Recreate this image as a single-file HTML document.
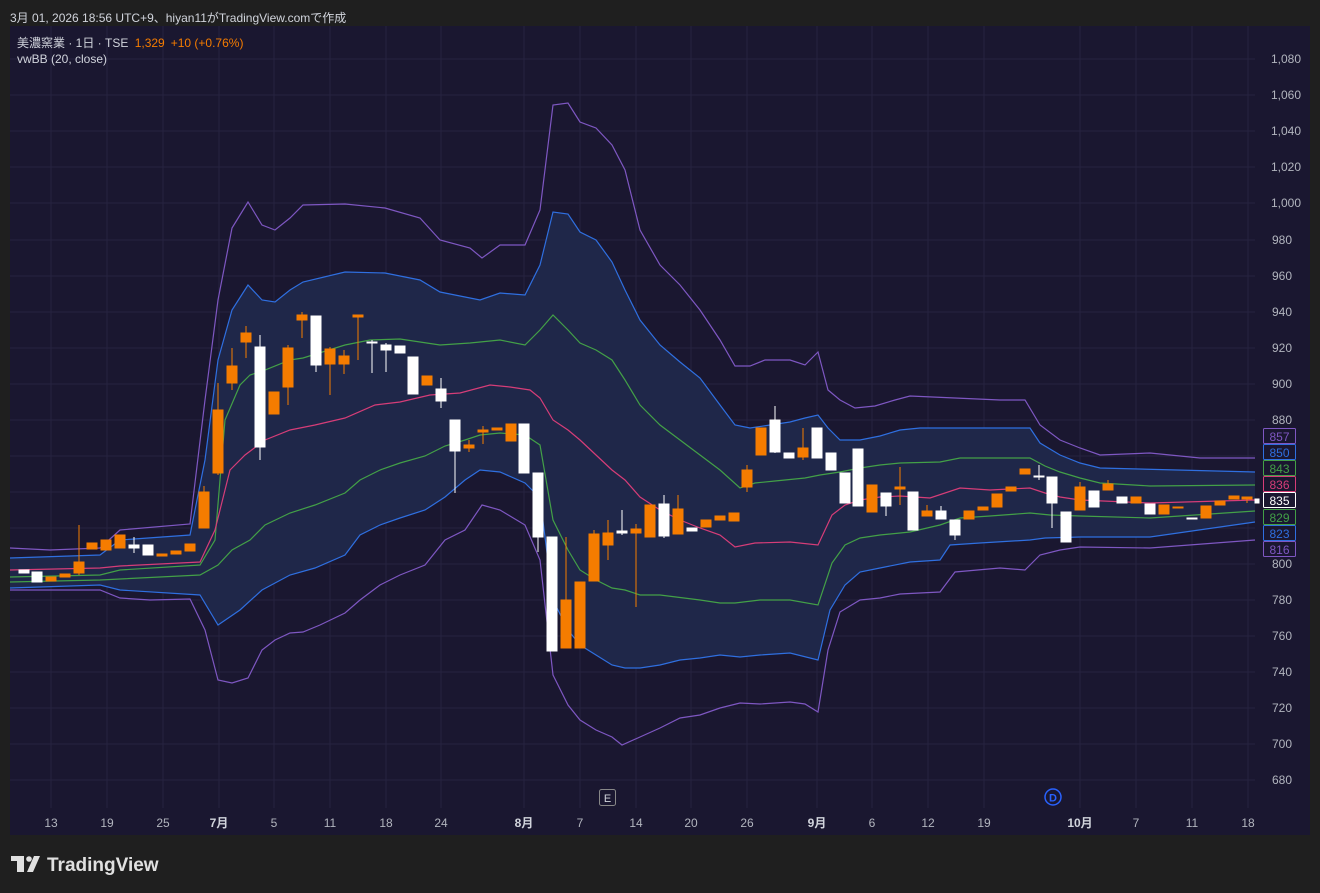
<!DOCTYPE html>
<html><head><meta charset="utf-8"><style>
html,body{margin:0;padding:0;background:#1f1f1f;width:1320px;height:893px;overflow:hidden;font-family:"Liberation Sans","Noto Sans CJK JP",sans-serif}
.t{position:absolute;white-space:nowrap}
</style></head><body>
<div class="t" style="left:10px;top:9px;font-size:12px;color:#d1d4dc">3月 01, 2026 18:56 UTC+9、hiyan11がTradingView.comで作成</div>
<svg style="position:absolute;left:0;top:0" width="1320" height="893" xmlns="http://www.w3.org/2000/svg" font-family="Liberation Sans, Noto Sans CJK JP, sans-serif">
<rect x="10" y="26" width="1300" height="809" fill="#1a1730"/>
<g stroke="#262340" stroke-width="1">
<line x1="10" x2="1255" y1="59" y2="59"/><line x1="10" x2="1255" y1="95" y2="95"/><line x1="10" x2="1255" y1="131" y2="131"/><line x1="10" x2="1255" y1="167" y2="167"/><line x1="10" x2="1255" y1="203" y2="203"/><line x1="10" x2="1255" y1="240" y2="240"/><line x1="10" x2="1255" y1="276" y2="276"/><line x1="10" x2="1255" y1="312" y2="312"/><line x1="10" x2="1255" y1="348" y2="348"/><line x1="10" x2="1255" y1="384" y2="384"/><line x1="10" x2="1255" y1="420" y2="420"/><line x1="10" x2="1255" y1="456" y2="456"/><line x1="10" x2="1255" y1="492" y2="492"/><line x1="10" x2="1255" y1="528" y2="528"/><line x1="10" x2="1255" y1="564" y2="564"/><line x1="10" x2="1255" y1="600" y2="600"/><line x1="10" x2="1255" y1="636" y2="636"/><line x1="10" x2="1255" y1="672" y2="672"/><line x1="10" x2="1255" y1="708" y2="708"/><line x1="10" x2="1255" y1="744" y2="744"/><line x1="10" x2="1255" y1="780" y2="780"/>
<g>
<line x1="51" x2="51" y1="26" y2="808"/><line x1="107" x2="107" y1="26" y2="808"/><line x1="163" x2="163" y1="26" y2="808"/><line x1="219" x2="219" y1="26" y2="808"/><line x1="274" x2="274" y1="26" y2="808"/><line x1="330" x2="330" y1="26" y2="808"/><line x1="386" x2="386" y1="26" y2="808"/><line x1="441" x2="441" y1="26" y2="808"/><line x1="524" x2="524" y1="26" y2="808"/><line x1="580" x2="580" y1="26" y2="808"/><line x1="636" x2="636" y1="26" y2="808"/><line x1="691" x2="691" y1="26" y2="808"/><line x1="747" x2="747" y1="26" y2="808"/><line x1="817" x2="817" y1="26" y2="808"/><line x1="872" x2="872" y1="26" y2="808"/><line x1="928" x2="928" y1="26" y2="808"/><line x1="984" x2="984" y1="26" y2="808"/><line x1="1080" x2="1080" y1="26" y2="808"/><line x1="1136" x2="1136" y1="26" y2="808"/><line x1="1192" x2="1192" y1="26" y2="808"/><line x1="1248" x2="1248" y1="26" y2="808"/>
</g></g>
<polygon fill="#1f2749" points="10,558 100,555 120,540 190,535 205,460 218,360 232,310 248,285 262,300 275,302 290,290 303,282 345,272 385,273 420,280 440,292 460,296 480,300 500,293 525,295 540,265 553,212 568,214 580,232 596,240 612,262 625,290 640,320 660,345 680,362 700,378 720,405 735,425 750,428 770,425 790,422 805,418 818,415 828,428 840,440 860,440 880,436 900,430 920,428 1030,428 1040,443 1060,455 1080,463 1100,468 1255,472 1255,522 1150,537 1080,537 1045,538 1030,540 980,543 950,545 940,560 910,562 880,568 860,572 845,585 830,610 818,660 790,653 760,655 740,657 720,655 700,658 680,660 660,665 640,668 625,668 612,665 596,655 580,645 568,630 553,600 540,498 525,483 500,472 480,470 465,480 445,497 425,510 400,518 380,525 360,535 345,555 315,568 290,575 262,590 240,610 218,625 200,595 120,590 100,585 10,588"/>
<g fill="none" stroke-width="1.2">
<polyline stroke="#7e57c2" points="10,548 50,550 100,548 120,530 190,524 205,400 218,300 232,228 248,202 262,225 275,230 290,218 303,205 345,204 385,208 420,218 440,240 470,248 482,258 500,245 525,245 540,210 553,105 568,103 580,122 596,128 612,145 625,170 640,230 660,265 680,285 700,310 720,340 735,366 750,366 765,360 790,360 805,365 818,352 828,390 840,400 855,408 875,406 895,400 910,396 1000,400 1025,400 1040,425 1060,440 1080,448 1100,455 1150,453 1200,458 1255,458"/>
<polyline stroke="#2f6fe0" points="10,558 100,555 120,540 190,535 205,460 218,360 232,310 248,285 262,300 275,302 290,290 303,282 345,272 385,273 420,280 440,292 460,296 480,300 500,293 525,295 540,265 553,212 568,214 580,232 596,240 612,262 625,290 640,320 660,345 680,362 700,378 720,405 735,425 750,428 770,425 790,422 805,418 818,415 828,428 840,440 860,440 880,436 900,430 920,428 1030,428 1040,443 1060,455 1080,463 1100,468 1255,472"/>
<polyline stroke="#43a047" points="10,577 100,575 120,570 200,565 215,540 225,420 240,385 250,375 265,370 290,360 303,358 345,345 370,340 400,339 440,345 470,343 500,340 525,345 540,330 553,315 568,330 580,343 596,350 612,360 625,380 640,405 660,425 680,440 700,455 720,470 740,488 755,483 775,481 805,478 820,475 840,472 860,468 880,465 900,463 940,462 960,458 1030,458 1045,466 1060,472 1080,478 1100,483 1150,486 1255,485"/>
<polyline stroke="#d63d78" points="10,570 100,568 120,566 200,562 215,530 230,470 245,455 265,440 290,430 315,425 345,418 375,405 400,402 430,395 460,393 490,385 510,387 530,390 540,398 553,420 568,430 580,440 596,455 612,470 625,480 640,497 660,510 680,520 700,528 720,535 735,547 755,543 790,542 818,545 832,515 845,505 860,500 880,497 900,496 930,498 960,488 990,490 1030,488 1045,493 1060,497 1080,500 1150,503 1255,500"/>
<polyline stroke="#43a047" points="10,582 100,580 200,575 218,565 232,550 250,540 265,525 290,513 315,505 345,493 360,480 380,470 400,463 425,456 445,446 465,440 480,435 500,433 525,435 540,445 553,520 568,550 580,570 596,580 612,588 625,590 640,595 660,595 700,600 720,603 735,603 760,600 790,600 818,605 832,563 845,545 860,538 880,535 910,532 940,525 960,518 990,516 1030,513 1050,515 1080,516 1150,518 1255,511"/>
<polyline stroke="#2f6fe0" points="10,588 100,585 120,590 200,595 218,625 240,610 262,590 290,575 315,568 345,555 360,535 380,525 400,518 425,510 445,497 465,480 480,470 500,472 525,483 540,498 553,600 568,630 580,645 596,655 612,665 625,668 640,668 660,665 680,660 700,658 720,655 740,657 760,655 790,653 818,660 830,610 845,585 860,572 880,568 910,562 940,560 950,545 980,543 1030,540 1045,538 1080,537 1150,537 1255,522"/>
<polyline stroke="#7e57c2" points="10,590 100,590 120,598 150,600 190,599 205,630 218,680 232,683 248,678 262,650 275,640 290,633 303,632 320,625 345,613 360,600 380,585 400,575 425,565 445,540 465,530 482,505 500,510 525,525 540,560 553,675 568,705 580,720 596,730 612,737 622,745 640,737 660,728 680,718 700,715 720,708 740,703 760,704 790,702 805,704 818,712 828,650 840,612 860,600 880,598 900,594 940,592 955,572 1000,568 1025,570 1040,555 1060,550 1080,547 1150,548 1255,540"/>
</g>
<g stroke="#f57c00" fill="#f57c00">
<line x1="79" x2="79" y1="525" y2="575"/><rect x="74" y="562" width="10" height="11"/>
<rect x="46" y="577" width="10" height="4"/><rect x="60" y="574" width="10" height="3"/>
<rect x="87" y="543" width="10" height="6"/><rect x="101" y="540" width="10" height="10"/><rect x="115" y="535" width="10" height="13"/>
<rect x="157" y="554" width="10" height="2"/><rect x="171" y="551" width="10" height="3"/><rect x="185" y="544" width="10" height="7"/>
<line x1="204" x2="204" y1="486" y2="528"/><rect x="199" y="492" width="10" height="36"/>
<line x1="218" x2="218" y1="383" y2="475"/><rect x="213" y="410" width="10" height="63"/>
<line x1="232" x2="232" y1="348" y2="390"/><rect x="227" y="366" width="10" height="17"/>
<line x1="246" x2="246" y1="326" y2="358"/><rect x="241" y="333" width="10" height="9"/>
<rect x="269" y="392" width="10" height="22"/>
<line x1="288" x2="288" y1="345" y2="405"/><rect x="283" y="348" width="10" height="39"/>
<line x1="302" x2="302" y1="312" y2="338"/><rect x="297" y="315" width="10" height="5"/>
<line x1="330" x2="330" y1="347" y2="395"/><rect x="325" y="349" width="10" height="15"/>
<line x1="344" x2="344" y1="350" y2="374"/><rect x="339" y="356" width="10" height="8"/>
<line x1="358" x2="358" y1="315" y2="360"/><rect x="353" y="315" width="10" height="2"/>
<rect x="422" y="376" width="10" height="9"/>
<rect x="464" y="445" width="10" height="3"/><line x1="469" x2="469" y1="440" y2="452"/>
<rect x="478" y="430" width="10" height="2"/><line x1="483" x2="483" y1="426" y2="444"/>
<rect x="492" y="428" width="10" height="2"/>
<rect x="506" y="424" width="10" height="17"/>
<line x1="566" x2="566" y1="537" y2="648"/><rect x="561" y="600" width="10" height="48"/>
<rect x="575" y="582" width="10" height="66"/>
<line x1="594" x2="594" y1="530" y2="580"/><rect x="589" y="534" width="10" height="47"/>
<line x1="608" x2="608" y1="520" y2="560"/><rect x="603" y="533" width="10" height="12"/>
<line x1="636" x2="636" y1="524" y2="607"/><rect x="631" y="529" width="10" height="4"/>
<rect x="645" y="505" width="10" height="32"/>
<line x1="678" x2="678" y1="495" y2="534"/><rect x="673" y="509" width="10" height="25"/>
<rect x="701" y="520" width="10" height="7"/><rect x="715" y="516" width="10" height="4"/><rect x="729" y="513" width="10" height="8"/>
<line x1="747" x2="747" y1="465" y2="492"/><rect x="742" y="470" width="10" height="17"/>
<rect x="756" y="428" width="10" height="27"/>
<line x1="803" x2="803" y1="428" y2="460"/><rect x="798" y="448" width="10" height="9"/>
<rect x="867" y="485" width="10" height="27"/>
<line x1="900" x2="900" y1="467" y2="505"/><rect x="895" y="487" width="10" height="2"/>
<line x1="927" x2="927" y1="505" y2="516"/><rect x="922" y="511" width="10" height="5"/>
<rect x="964" y="511" width="10" height="8"/><rect x="978" y="507" width="10" height="3"/><rect x="992" y="494" width="10" height="13"/><rect x="1006" y="487" width="10" height="4"/><rect x="1020" y="469" width="10" height="5"/>
<line x1="1080" x2="1080" y1="482" y2="510"/><rect x="1075" y="487" width="10" height="23"/>
<line x1="1108" x2="1108" y1="480" y2="490"/><rect x="1103" y="484" width="10" height="6"/>
<rect x="1131" y="497" width="10" height="6"/><rect x="1159" y="505" width="10" height="9"/><rect x="1173" y="507" width="10" height="1"/>
<rect x="1201" y="506" width="10" height="12"/><rect x="1215" y="501" width="10" height="4"/><rect x="1229" y="496" width="10" height="3"/>
<line x1="1247" x2="1247" y1="497" y2="503"/><rect x="1242" y="497" width="10" height="2"/>
</g>
<g stroke="#ffffff" fill="#ffffff">
<rect x="19" y="570" width="10" height="3"/><rect x="32" y="572" width="10" height="10"/>
<line x1="134" x2="134" y1="537" y2="553"/><rect x="129" y="545" width="10" height="3"/><rect x="143" y="545" width="10" height="10"/>
<line x1="260" x2="260" y1="335" y2="460"/><rect x="255" y="347" width="10" height="100"/>
<line x1="316" x2="316" y1="316" y2="372"/><rect x="311" y="316" width="10" height="49"/>
<line x1="372" x2="372" y1="340" y2="373"/><rect x="367" y="342" width="10" height="1"/>
<line x1="386" x2="386" y1="343" y2="372"/><rect x="381" y="345" width="10" height="5"/>
<rect x="395" y="346" width="10" height="7"/><rect x="408" y="357" width="10" height="37"/>
<line x1="441" x2="441" y1="378" y2="408"/><rect x="436" y="389" width="10" height="12"/>
<line x1="455" x2="455" y1="420" y2="493"/><rect x="450" y="420" width="10" height="31"/>
<rect x="519" y="424" width="10" height="49"/>
<line x1="538" x2="538" y1="473" y2="552"/><rect x="533" y="473" width="10" height="64"/>
<rect x="547" y="537" width="10" height="114"/>
<line x1="622" x2="622" y1="510" y2="535"/><rect x="617" y="531" width="10" height="2"/>
<line x1="664" x2="664" y1="495" y2="538"/><rect x="659" y="504" width="10" height="32"/>
<rect x="687" y="528" width="10" height="3"/>
<line x1="775" x2="775" y1="406" y2="453"/><rect x="770" y="420" width="10" height="32"/>
<rect x="784" y="453" width="10" height="5"/><rect x="812" y="428" width="10" height="30"/><rect x="826" y="453" width="10" height="17"/><rect x="840" y="473" width="10" height="30"/><rect x="853" y="449" width="10" height="57"/>
<line x1="886" x2="886" y1="493" y2="516"/><rect x="881" y="493" width="10" height="13"/>
<rect x="908" y="492" width="10" height="38"/>
<line x1="941" x2="941" y1="506" y2="519"/><rect x="936" y="511" width="10" height="8"/>
<line x1="955" x2="955" y1="520" y2="540"/><rect x="950" y="520" width="10" height="15"/>
<line x1="1039" x2="1039" y1="465" y2="480"/><rect x="1034" y="476" width="10" height="1"/>
<line x1="1052" x2="1052" y1="477" y2="528"/><rect x="1047" y="477" width="10" height="26"/>
<rect x="1061" y="512" width="10" height="30"/><rect x="1089" y="491" width="10" height="16"/><rect x="1117" y="497" width="10" height="6"/><rect x="1145" y="504" width="10" height="10"/><rect x="1187" y="518" width="10" height="1"/><rect x="1255" y="499" width="4" height="4"/>
</g>
<g fill="#b2b5be" font-size="12" text-anchor="end">
<text x="1301" y="63">1,080</text><text x="1301" y="99">1,060</text><text x="1301" y="135">1,040</text><text x="1301" y="171">1,020</text><text x="1301" y="207">1,000</text><text x="1292" y="244">980</text><text x="1292" y="280">960</text><text x="1292" y="316">940</text><text x="1292" y="352">920</text><text x="1292" y="388">900</text><text x="1292" y="424">880</text><text x="1292" y="568">800</text><text x="1292" y="604">780</text><text x="1292" y="640">760</text><text x="1292" y="676">740</text><text x="1292" y="712">720</text><text x="1292" y="748">700</text><text x="1292" y="784">680</text>
</g>
<g font-size="12" text-anchor="middle" fill="#b2b5be">
<text x="51" y="827">13</text><text x="107" y="827">19</text><text x="163" y="827">25</text><text x="219" y="827" font-weight="bold" fill="#d1d4dc">7月</text><text x="274" y="827">5</text><text x="330" y="827">11</text><text x="386" y="827">18</text><text x="441" y="827">24</text><text x="524" y="827" font-weight="bold" fill="#d1d4dc">8月</text><text x="580" y="827">7</text><text x="636" y="827">14</text><text x="691" y="827">20</text><text x="747" y="827">26</text><text x="817" y="827" font-weight="bold" fill="#d1d4dc">9月</text><text x="872" y="827">6</text><text x="928" y="827">12</text><text x="984" y="827">19</text><text x="1080" y="827" font-weight="bold" fill="#d1d4dc">10月</text><text x="1136" y="827">7</text><text x="1192" y="827">11</text><text x="1248" y="827">18</text>
</g>
<g font-size="12" text-anchor="middle">
<rect x="1263.5" y="428.5" width="32" height="15" rx="1" fill="#1a1730" stroke="#7e57c2"/><text x="1279.5" y="441" fill="#7e57c2">857</text>
<rect x="1263.5" y="444.5" width="32" height="15" rx="1" fill="#1a1730" stroke="#2f6fe0"/><text x="1279.5" y="457" fill="#2f6fe0">850</text>
<rect x="1263.5" y="460.5" width="32" height="15" rx="1" fill="#1a1730" stroke="#43a047"/><text x="1279.5" y="473" fill="#43a047">843</text>
<rect x="1263.5" y="476.5" width="32" height="15" rx="1" fill="#1a1730" stroke="#d63d78"/><text x="1279.5" y="489" fill="#d63d78">836</text>
<rect x="1263.5" y="492.5" width="32" height="15" rx="1" fill="#1a1730" stroke="#ffffff"/><text x="1279.5" y="505" fill="#ffffff">835</text>
<rect x="1263.5" y="509.5" width="32" height="15" rx="1" fill="#1a1730" stroke="#43a047"/><text x="1279.5" y="522" fill="#43a047">829</text>
<rect x="1263.5" y="525.5" width="32" height="15" rx="1" fill="#1a1730" stroke="#2f6fe0"/><text x="1279.5" y="538" fill="#2f6fe0">823</text>
<rect x="1263.5" y="541.5" width="32" height="15" rx="1" fill="#1a1730" stroke="#7e57c2"/><text x="1279.5" y="554" fill="#7e57c2">816</text>
</g>
<rect x="599.5" y="789.5" width="16" height="16" rx="2" fill="#1a1730" stroke="#888"/><text x="607.5" y="802" font-size="11" text-anchor="middle" fill="#d1d4dc">E</text>
<circle cx="1053" cy="797" r="8" fill="#1a1730" stroke="#2962ff" stroke-width="1.5"/><text x="1053" y="801.5" font-size="11" font-weight="bold" text-anchor="middle" fill="#2962ff">D</text>
<text x="17" y="47" font-size="12" fill="#d1d4dc">美濃窯業 · 1日 · TSE <tspan fill="#f57c00" dx="3">1,329</tspan><tspan fill="#f57c00" dx="6">+10 (+0.76%)</tspan></text>
<text x="17" y="63" font-size="12" fill="#d1d4dc">vwBB (20, close)</text>
<g fill="#e0e0e0">
<rect x="11" y="856" width="13" height="5"/><rect x="17" y="856" width="7" height="16"/>
<circle cx="29" cy="859" r="2.8"/>
<polygon points="34,856 40,856 33,872 27,872"/>
</g>
<text x="47" y="871" font-size="19" font-weight="bold" fill="#e0e0e0">TradingView</text>
</svg>
</body></html>
